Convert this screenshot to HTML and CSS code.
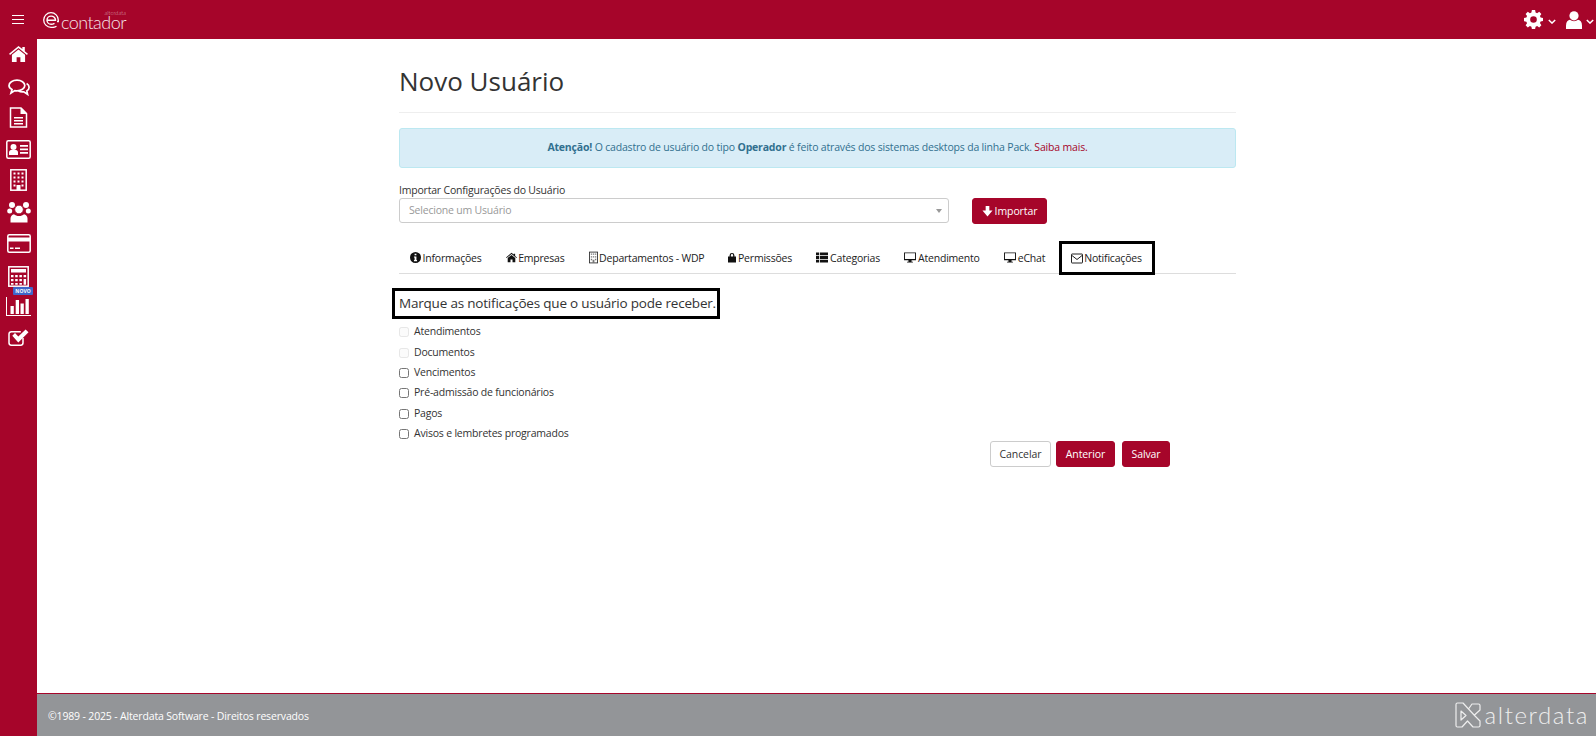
FILE: index.html
```html
<!DOCTYPE html>
<html lang="pt-BR">
<head>
<meta charset="utf-8">
<title>Novo Usuário</title>
<link rel="stylesheet" href="styles.css">
</head>
<body>
<div class="app">
  <header class="topbar">
    <button class="burger" aria-label="Menu"><span></span><span></span><span></span></button>
    <div class="logo">
      <svg class="logo-e" viewBox="0 0 16 16"><path d="M4 8.300h8.500c0-2.400-2-4.200-4.400-4.200a4.100 4.100 0 0 0 0 8.200c1.500 0 2.400-.4 3.400-1" fill="none" stroke="#fff" stroke-width="1.400"/><path d="M13.500 14.200A7.400 7.400 0 0 1 8 15.300 7.300 7.300 0 1 1 15.300 8v1.500H14" fill="none" stroke="#fff" stroke-width="1.300"/></svg>
      <div class="logo-words"><span class="logo-small">alterdata</span><span class="logo-name">contador</span></div>
    </div>
    <div class="top-actions">
      <svg class="gear" viewBox="0 0 20 20"><path fill="#fff" fill-rule="evenodd" d="M8.300 0h3.400l.5 2.600 1.600.7L16 1.800l2.300 2.300-1.500 2.200.7 1.600 2.500.5v3.300l-2.500.5-.7 1.600 1.500 2.200-2.300 2.300-2.200-1.500-1.600.7-.5 2.400H8.300l-.5-2.400-1.600-.7L4 18.400l-2.300-2.300 1.500-2.200-.7-1.600L0 11.800V8.400l2.500-.5.7-1.600L1.700 4.100 4 1.800l2.200 1.500 1.600-.7zM10 6.500a3.500 3.500 0 1 0 0 7 3.500 3.500 0 0 0 0-7z"/></svg>
      <svg class="chev" viewBox="0 0 10 6"><path d="M1 1l4 4 4-4" fill="none" stroke="#fff" stroke-width="1.800"/></svg>
      <svg class="user" viewBox="0 0 16 18"><circle cx="8" cy="4.800" r="4.600" fill="#fff"/><path d="M0 18v-3.500C0 11 2 9 4 8.800c1 .9 2.500 1.400 4 1.400s3-.5 4-1.400c2 .2 4 2.200 4 5.700V18z" fill="#fff"/></svg>
      <svg class="chev" viewBox="0 0 10 6"><path d="M1 1l4 4 4-4" fill="none" stroke="#fff" stroke-width="1.800"/></svg>
    </div>
  </header>

  <div class="middle">
    <nav class="sidebar">
      <a class="side-item s-home"><svg viewBox="0 0 20 17"><path fill="#fff" d="M10 0 0 8.300l1 1.200L10 2.100l9 7.400 1-1.200-3.300-2.800V1h-2.600v2.300z"/><path fill="#fff" d="M10 3.600 3 9.400V17h5v-5h4v5h5V9.400z"/></svg></a>
      <a class="side-item s-chat"><svg viewBox="0 0 22 18"><path fill="none" stroke="#fff" stroke-width="1.700" d="M9 1.200c4.300 0 7.800 2.400 7.800 5.300S13.300 11.800 9 11.800c-.8 0-1.500-.1-2.200-.2L3 14l1-3.400C2.200 9.600 1 8.100 1 6.500c0-2.900 3.600-5.300 8-5.300z"/><path fill="none" stroke="#fff" stroke-width="1.700" d="M18.600 4.500c1.500.9 2.500 2.200 2.500 3.700 0 1.500-.9 2.800-2.300 3.700l.8 3.400-3.800-2.400c-2 .2-4-.1-5.400-1"/></svg></a>
      <a class="side-item s-doc"><svg viewBox="0 0 18 21"><path fill="none" stroke="#fff" stroke-width="1.500" d="M1 1h10.500L17 6.500V20H1z"/><path fill="#fff" d="M11 1h1l5 5v1h-6zM4.500 10h9v1.500h-9zM4.500 13h9v1.500h-9zM4.500 16h9v1.500h-9z"/></svg></a>
      <a class="side-item s-card"><svg viewBox="0 0 25 19"><rect x=".8" y=".8" width="23.400" height="17.400" rx="1.500" fill="none" stroke="#fff" stroke-width="1.500"/><circle cx="7.500" cy="7" r="3" fill="#fff"/><path fill="#fff" d="M3 15v-2.500c0-1.500 1-2.500 2-2.500h5c1 0 2 1 2 2.500V15zM14 5h8v1.700h-8zM14 8.500h8v1.700h-8zM14 12h8v1.700h-8z"/></svg></a>
      <a class="side-item s-build"><svg viewBox="0 0 17 22"><rect x=".8" y=".8" width="15.400" height="20.400" fill="none" stroke="#fff" stroke-width="1.500"/><path fill="#fff" d="M3.500 3.500h2v2h-2zM7.500 3.500h2v2h-2zM11.500 3.500h2v2h-2zM3.500 7.500h2v2h-2zM7.500 7.500h2v2h-2zM11.500 7.500h2v2h-2zM3.500 11.500h2v2h-2zM7.500 11.500h2v2h-2zM11.500 11.500h2v2h-2zM3.500 15.500h2v2h-2zM11.500 15.500h2v2h-2zM6.500 16h4v5h-4z"/></svg></a>
      <a class="side-item s-users"><svg viewBox="0 0 24 21"><circle cx="5" cy="3.500" r="3" fill="#fff"/><circle cx="19" cy="3.500" r="3" fill="#fff"/><circle cx="2.700" cy="9.500" r="2.500" fill="#fff"/><circle cx="21.300" cy="9.500" r="2.500" fill="#fff"/><circle cx="12" cy="8" r="4.300" fill="#fff" stroke="#a6052a" stroke-width=".8"/><path fill="#fff" d="M3.500 21v-4c0-2 1.500-4 3.500-4.300 1.200 1.200 3 1.800 5 1.800s3.800-.6 5-1.800c2 .3 3.500 2.300 3.500 4.300v4z"/></svg></a>
      <a class="side-item s-credit"><svg viewBox="0 0 24 19"><rect x=".8" y=".8" width="22.400" height="17.400" rx="1.500" fill="none" stroke="#fff" stroke-width="1.500"/><path fill="#fff" d="M1 3.500h22V7.500H1zM3 13.500h3.500V15H3zM8 13.500h5V15H8z"/></svg></a>
      <a class="side-item s-calc"><svg viewBox="0 0 21 21"><rect x=".8" y=".8" width="19.400" height="19.400" fill="none" stroke="#fff" stroke-width="1.500"/><path fill="#fff" d="M3 3h15v3.500H3zM3 9h2.500v2.200H3zM7.200 9h2.500v2.200H7.200zM11.400 9h2.500v2.200h-2.500zM15.600 9h2.500v2.200h-2.500zM3 13h2.500v2.200H3zM7.200 13h2.500v2.200H7.200zM11.400 13h2.500v2.200h-2.500zM3 17h2.500v1.800H3zM7.200 17h2.500v1.800H7.200zM11.400 17h2.500v1.800h-2.500zM15.600 13h2.500v5.800h-2.500z"/></svg></a>
      <a class="side-item s-chart"><span class="novo">NOVO</span><svg viewBox="0 0 25 19"><path fill="#fff" d="M0 0h1v18h24v1H0zM4.500 9h3.300v8H4.500zM9.700 3h3.300v14H9.700zM14.500 6.500h3.300V17h-3.300zM19.500 2h3.300v15h-3.300z"/></svg></a>
      <a class="side-item s-check"><svg viewBox="0 0 21 17"><path fill="none" stroke="#fff" stroke-width="1.500" d="M15 9v4.800c0 1.300-1 2.400-2.300 2.400H3.300C2 16.200 1 15.100 1 13.800V5c0-1.300 1-2.300 2.300-2.300h9.500"/><path fill="#fff" d="m4.300 6.800 2.700-2.700 3.300 3.300L17.600.5 20.500 3.300 10.300 13.500z"/></svg></a>
    </nav>

    <main class="content">
      <div class="container">
        <h1 class="title">Novo Usuário</h1>
        <div class="alert"><strong>Atenção!</strong> O cadastro de usuário do tipo <strong>Operador</strong> é feito através dos sistemas desktops da linha Pack. <a class="alert-link">Saiba mais.</a></div>

        <label class="import-label">Importar Configurações do Usuário</label>
        <div class="import-row">
          <div class="select"><span>Selecione um Usuário</span><i class="caret"></i></div>
          <button class="btn btn-red btn-import"><svg class="ic-arrow" viewBox="0 0 12 12"><path fill="#fff" d="M4 0h4v5h3.500L6 11.500.5 5H4z"/></svg> Importar</button>
        </div>

        <ul class="tabs">
          <li class="tab tab-tight"><svg viewBox="0 0 12 12"><path fill-rule="evenodd" d="M6 0a6 6 0 1 1 0 12A6 6 0 0 1 6 0zM5 1.800v1.800h2V1.800zM4.300 5v1.100H5v2.700h-.7V10h3.400V8.800H7V5z"/></svg>Informações</li>
          <li class="tab tab-tight"><svg viewBox="0 0 13 11"><path d="M6.500 0 0 5.400l.7.800L6.500 1.400l5.800 4.800.7-.8-2.200-1.800V1H9.100v1z"/><path d="M6.500 2.400 2 6.100V11h3.300V7.800h2.400V11H11V6.100z"/></svg>Empresas</li>
          <li class="tab tab-tight"><svg class="ic-b" viewBox="0 0 10 13"><rect x=".5" y=".5" width="9" height="12" fill="#fff" stroke="#333"/><path fill="#777" d="M2 2h1.500v1.500H2zM4.300 2h1.500v1.500H4.300zM6.600 2h1.500v1.500H6.600zM2 5h1.500v1.500H2zM4.300 5h1.500v1.500H4.300zM6.600 5h1.500v1.500H6.600zM2 8h1.500v1.500H2zM6.600 8h1.500v1.500H6.600zM4 9h2v3.500H4z"/></svg>Departamentos - WDP</li>
          <li class="tab tab-tight"><svg class="ic-l" viewBox="0 0 9 11"><path d="M1.800 4.500V3a2.700 2.700 0 0 1 5.400 0v1.500H9V11H0V4.500zm1.400 0h2.600V3a1.300 1.300 0 0 0-2.600 0z"/></svg>Permissões</li>
          <li class="tab"><svg viewBox="0 0 12 10"><path d="M0 0h3.200v2.800H0zM4 0h8v2.800H4zM0 3.600h3.200v2.800H0zM4 3.600h8v2.800H4zM0 7.200h3.200V10H0zM4 7.200h8V10H4z"/></svg>Categorias</li>
          <li class="tab"><svg viewBox="0 0 13 11"><path fill-rule="evenodd" d="M0 0h13v8.500H8.200V10h1.500v1H3.300v-1h1.500V8.500H0zm1 1v6.200h11V1z"/></svg>Atendimento</li>
          <li class="tab"><svg viewBox="0 0 13 11"><path fill-rule="evenodd" d="M0 0h13v8.500H8.200V10h1.500v1H3.300v-1h1.500V8.500H0zm1 1v6.200h11V1z"/></svg>eChat</li>
          <li class="tab tab-active"><svg viewBox="0 0 12 10"><path fill="none" stroke="#222" d="M1 .5h10a.5.5 0 0 1 .5.500v8a.5.5 0 0 1-.5.500H1a.5.5 0 0 1-.5-.500V1A.5.5 0 0 1 1 .5zM.7 1.800 6 6l5.300-4.200"/></svg>Notificações</li>
        </ul>

        <h4 class="subtitle">Marque as notificações que o usuário pode receber.</h4>

        <div class="checks">
          <label class="check disabled"><input type="checkbox" disabled>Atendimentos</label>
          <label class="check disabled"><input type="checkbox" disabled>Documentos</label>
          <label class="check"><input type="checkbox">Vencimentos</label>
          <label class="check"><input type="checkbox">Pré-admissão de funcionários</label>
          <label class="check"><input type="checkbox">Pagos</label>
          <label class="check"><input type="checkbox">Avisos e lembretes programados</label>
        </div>

        <div class="actions">
          <button class="btn btn-light">Cancelar</button>
          <button class="btn btn-red">Anterior</button>
          <button class="btn btn-red">Salvar</button>
        </div>
      </div>
    </main>
  </div>

  <footer class="footer">
    <span class="copy">©1989 - 2025 - Alterdata Software - Direitos reservados</span>
    <div class="brand">
      <svg class="brand-mark" viewBox="0 0 26 26"><path fill="none" stroke="#eee" stroke-width="1.200" stroke-linejoin="round" d="M1 2.500Q1 1 2.500 1H8L20 14l5 5v4.500Q25 25 23.500 25H18l-5.500-6L7 25H2.500Q1 25 1 23.500zM6 9l5 4.500L6 18zM13.500 7 17 2h6.500Q25 2 25 3.500V8l-5.500 5"/></svg>
      <span class="brand-name">alterdata</span>
    </div>
  </footer>
</div>
</body>
</html>
```
FILE: styles.css
```css
* { box-sizing: border-box; }
html, body { margin: 0; height: 100%; }
body { font-family: "Open Sans", sans-serif; font-size: 10.5px; letter-spacing: -.2px; color: #333; background: #fff; overflow: hidden; }
.app { display: flex; flex-direction: column; height: 736px; }

.topbar { flex: 0 0 39px; background: #a6052a; display: flex; align-items: center; color: #fff; }
.burger { width: 37px; height: 39px; padding: 0 0 0 12px; border: 0; background: none; display: flex; flex-direction: column; justify-content: center; gap: 3px; }
.burger span { display: block; width: 12px; height: 1px; background: #fff; }
.logo { display: flex; align-items: center; margin-left: 6px; height: 20px; }
.logo-e { width: 16px; height: 16px; }
.logo-words { display: flex; flex-direction: column; align-items: flex-end; margin-left: 2px; }
.logo-small { font: 300 5.500px/6px "Lato", sans-serif; color: #dca9b6; letter-spacing: .1px; }
.logo-name { font: 300 18px/13px "Lato", sans-serif; letter-spacing: -.55px; color: #f4e4e8; }
.top-actions { margin-left: auto; display: flex; align-items: center; padding-right: 2px; }
.gear { width: 19px; height: 19px; }
.chev { width: 8px; height: 5px; margin-top: 3px; margin-left: 5px; }
.user { width: 16px; height: 18px; margin-left: 10px; }
.user + .chev { margin-left: 4px; }

.middle { flex: 1; display: flex; min-height: 0; }
.sidebar { flex: 0 0 37px; background: #a6052a; display: flex; flex-direction: column; align-items: center; }
.side-item { display: flex; justify-content: center; align-items: center; position: relative; width: 37px; height: 22px; margin-top: 9px; }
.side-item svg { display: block; flex: none; }
.s-home { margin-top: 4px; }
.s-home svg { width: 19px; height: 16px; }
.s-chat { margin-top: 12px; }
.s-chat svg { width: 22px; height: 18px; }
.s-doc { margin-top: 7px; }
.s-doc svg { width: 19px; height: 21px; }
.s-card { margin-top: 10px; }
.s-card svg { width: 25px; height: 19px; }
.s-build svg { width: 17px; height: 22px; }
.s-users { margin-top: 10px; }
.s-users svg { width: 24px; height: 22px; }
.s-credit svg { width: 24px; height: 19px; }
.s-calc { margin-top: 11px; }
.s-calc svg { width: 21px; height: 21px; }
.s-chart { margin-top: 8px; }
.s-chart svg { width: 25px; height: 19px; }
.s-check svg { width: 21px; height: 17px; }
.novo { position: absolute; top: -8px; left: 13px; background: #3f66c9; color: #fff; font: 700 5px/8px "Open Sans", sans-serif; letter-spacing: 0; border-radius: 1px; width: 20px; text-align: center; }

.content { flex: 1; min-width: 0; }
.container { width: 837px; margin-left: 362px; }
.title { margin: 0; height: 74px; padding-top: 24px; font-size: 26px; line-height: 36px; font-weight: 400; letter-spacing: 0; color: #333; border-bottom: 1px solid #eee; }
.alert { margin-top: 15px; height: 40px; background: #d9edf7; border: 1px solid #bce8f1; border-radius: 3px; color: #31708f; text-align: center; line-height: 37px; letter-spacing: -.18px; }
.alert strong { font-weight: 700; }
.alert-link { color: #a6052a; }
.import-label { display: block; margin-top: 14px; line-height: 16px; color: #333; }
.import-row { display: flex; align-items: flex-start; }
.select { width: 550px; height: 25px; border: 1px solid #ccc; border-radius: 3px; display: flex; align-items: center; justify-content: space-between; padding: 0 6px 2px 9px; color: #999; }
.caret { width: 0; height: 0; border: 3px solid transparent; border-top: 4px solid #999; border-bottom: 0; margin-top: 2px; }
.btn { height: 26px; border-radius: 3px; font: 400 10.500px/1 "Open Sans", sans-serif; letter-spacing: -.1px; padding: 0; }
.btn-red { background: #a6052a; border: 1px solid #a6052a; color: #fff; }
.btn-light { background: #fff; border: 1px solid #ccc; color: #333; }
.btn-import { margin-left: 23px; width: 75px; display: flex; align-items: center; justify-content: center; gap: 2px; }
.ic-arrow { width: 11px; height: 11px; }

.tabs { list-style: none; margin: 18px 0 0; padding: 0; height: 32px; display: flex; border-bottom: 1px solid #ddd; }
.tab { display: flex; align-items: center; height: 31px; padding: 0 12px; color: #222; white-space: nowrap; }
.tab:first-child { padding-left: 11px; }
.tab svg { width: 12px; height: 11px; margin-right: 2px; fill: #111; flex: none; }
.tab-tight svg { width: 11px; margin-right: 1.500px; }
.tab .ic-b { height: 13px; width: 9px; }
.tab .ic-l { width: 8px; }
.tab-active { outline: 3px solid #000; outline-offset: -2px; height: 32px; margin-left: 3px; padding: 0 12px 0 11px; }
.tab-active svg { margin-right: 1px; }

.subtitle { margin: 14px 0 0 -7px; width: 328px; height: 31px; outline: 3px solid #000; outline-offset: -3px; padding-left: 7px; font-size: 13.500px; line-height: 30px; font-weight: 400; color: #333; white-space: nowrap; }

.checks { margin-top: 3px; }
.check { display: flex; align-items: center; height: 20.400px; padding-bottom: 2px; color: #333; }
.check input { margin: 2px 5px 0 0; width: 10px; height: 10px; flex: none; }
.disabled input { opacity: .5; }

.actions { display: flex; gap: 5px; margin: -3.400px 0 0 591px; }
.actions .btn-light { width: 61px; }
.actions .btn-red { width: 59px; }
.actions .btn-red:last-child { width: 48px; margin-left: 2px; }

.footer { flex: 0 0 43px; margin-left: 37px; background: #939598; border-top: 1px solid #a6052a; display: flex; align-items: center; justify-content: space-between; color: #fff; padding: 1px 7px 0 11px; position: relative; }
.footer::before { content: ""; position: absolute; left: -37px; top: -1px; bottom: 0; width: 37px; background: #a6052a; }
.copy { font-size: 10.500px; letter-spacing: -.16px; }
.brand { display: flex; align-items: center; gap: 4px; margin-top: -1px; }
.brand-mark { width: 26px; height: 26px; }
.brand-name { font: 300 24px/26px "Lato", sans-serif; letter-spacing: 1.6px; color: #eee; }
```
